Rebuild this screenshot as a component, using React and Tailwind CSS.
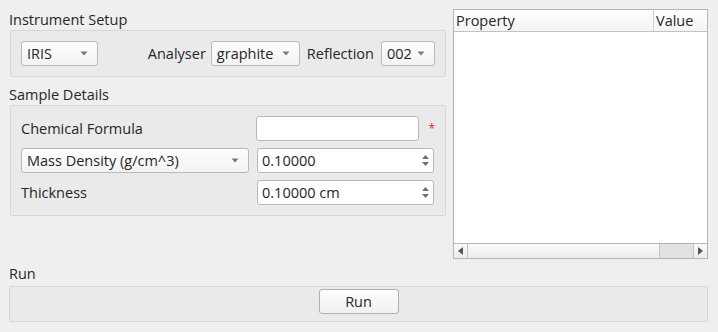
function Caret() {
  return (
    <svg width="8" height="5" viewBox="0 0 8 5" className="shrink-0">
      <path d="M0.5 0.5 L7.5 0.5 L4 4.5 Z" fill="#7a7a7a" />
    </svg>
  );
}

function Combo({ label, className }) {
  return (
    <div
      className={`flex h-[25px] items-center justify-between rounded-[3px] border border-[#b9b9b9] bg-gradient-to-b from-[#fdfdfd] to-[#f3f3f3] pl-[5px] pr-[9px] ${className}`}
    >
      <span>{label}</span>
      <Caret />
    </div>
  );
}

function SpinBox({ value }) {
  return (
    <div className="flex h-[25px] w-[177px] items-center justify-between rounded-[3px] border border-[#b9b9b9] bg-white pl-[4px] pr-[4px]">
      <span>{value}</span>
      <div className="flex flex-col items-center gap-[3px]">
        <svg width="7" height="4" viewBox="0 0 7 4">
          <path d="M0 4 L3.5 0 L7 4 Z" fill="#6e6e6e" />
        </svg>
        <svg width="7" height="4" viewBox="0 0 7 4">
          <path d="M0 0 L7 0 L3.5 4 Z" fill="#6e6e6e" />
        </svg>
      </div>
    </div>
  );
}

export default function App() {
  return (
    <div
      className="flex h-[332px] w-[718px] flex-col bg-[#efefef] text-[14.5px] text-[#262626]"
      style={{ fontFamily: '"Open Sans", "DejaVu Sans", sans-serif' }}
    >
      <div className="flex gap-[7px] pl-[9px] pr-[10px] pt-[9px]">
        {/* left column */}
        <div className="flex w-[437px] flex-col">
          <div className="h-[21px] leading-[21px]">Instrument Setup</div>
          <div className="ml-[1px] flex items-center rounded-[2px] border border-[#d6d6d6] bg-[#eaeaea] px-[10px] py-[10px]">
            <Combo label="IRIS" className="w-[77px]" />
            <span className="ml-auto">Analyser</span>
            <Combo label="graphite" className="ml-[5px] w-[89px]" />
            <span className="ml-[7px]">Reflection</span>
            <Combo label="002" className="ml-[7px] w-[54px]" />
          </div>
          <div className="mt-[7px] h-[21px] leading-[21px]">Sample Details</div>
          <div className="ml-[1px] flex flex-col gap-[7px] rounded-[2px] border border-[#d6d6d6] bg-[#eaeaea] px-[10px] py-[10px]">
            <div className="flex items-center">
              <span className="w-[236px]">Chemical Formula</span>
              <div className="h-[25px] w-[164px] rounded-[3px] border border-[#b9b9b9] bg-white" />
              <span className="ml-[9px] text-[12px] leading-none text-[#ff2020]">*</span>
            </div>
            <div className="flex items-center">
              <Combo label="Mass Density (g/cm^3)" className="w-[228px]" />
              <div className="ml-[8px]">
                <SpinBox value="0.10000" />
              </div>
            </div>
            <div className="flex items-center">
              <span className="w-[236px]">Thickness</span>
              <SpinBox value="0.10000 cm" />
            </div>
          </div>
        </div>

        {/* property table */}
        <div className="flex h-[250px] flex-1 flex-col border border-[#b5b5b5] bg-white">
          <div className="flex h-[22px] items-center border-b border-[#c2c2c2] bg-gradient-to-b from-[#fefefe] to-[#f4f4f4]">
            <div className="flex h-full w-[200px] items-center border-r border-[#d0d0d0] pl-[2px]">Property</div>
            <div className="pl-[2px]">Value</div>
          </div>
          <div className="flex-1" />
          <div className="flex h-[15px] border-t border-[#b5b5b5] bg-gradient-to-b from-[#fbfbfb] to-[#ececec]">
            <div className="flex w-[14px] items-center justify-center border-r border-[#c4c4c4]">
              <svg width="5" height="8" viewBox="0 0 5 8">
                <path d="M5 0 L0 4 L5 8 Z" fill="#555" />
              </svg>
            </div>
            <div className="flex-1" />
            <div className="w-[35px] border-x border-[#c4c4c4] bg-[#e2e2e2]" />
            <div className="flex w-[13px] items-center justify-center">
              <svg width="5" height="8" viewBox="0 0 5 8">
                <path d="M0 0 L5 4 L0 8 Z" fill="#555" />
              </svg>
            </div>
          </div>
        </div>
      </div>

      <div className="mt-[4px] h-[21px] pl-[9px] leading-[21px]">Run</div>
      <div className="ml-[9px] mr-[10px] mt-[2px] flex h-[36px] justify-center rounded-[2px] border border-[#d6d6d6] bg-[#eaeaea] pt-[2px]">
        <button className="h-[25px] w-[80px] rounded-[3px] border border-[#b0b0b0] bg-gradient-to-b from-[#fdfdfd] to-[#f1f1f1] text-[14.5px] text-[#262626]">
          Run
        </button>
      </div>
    </div>
  );
}
